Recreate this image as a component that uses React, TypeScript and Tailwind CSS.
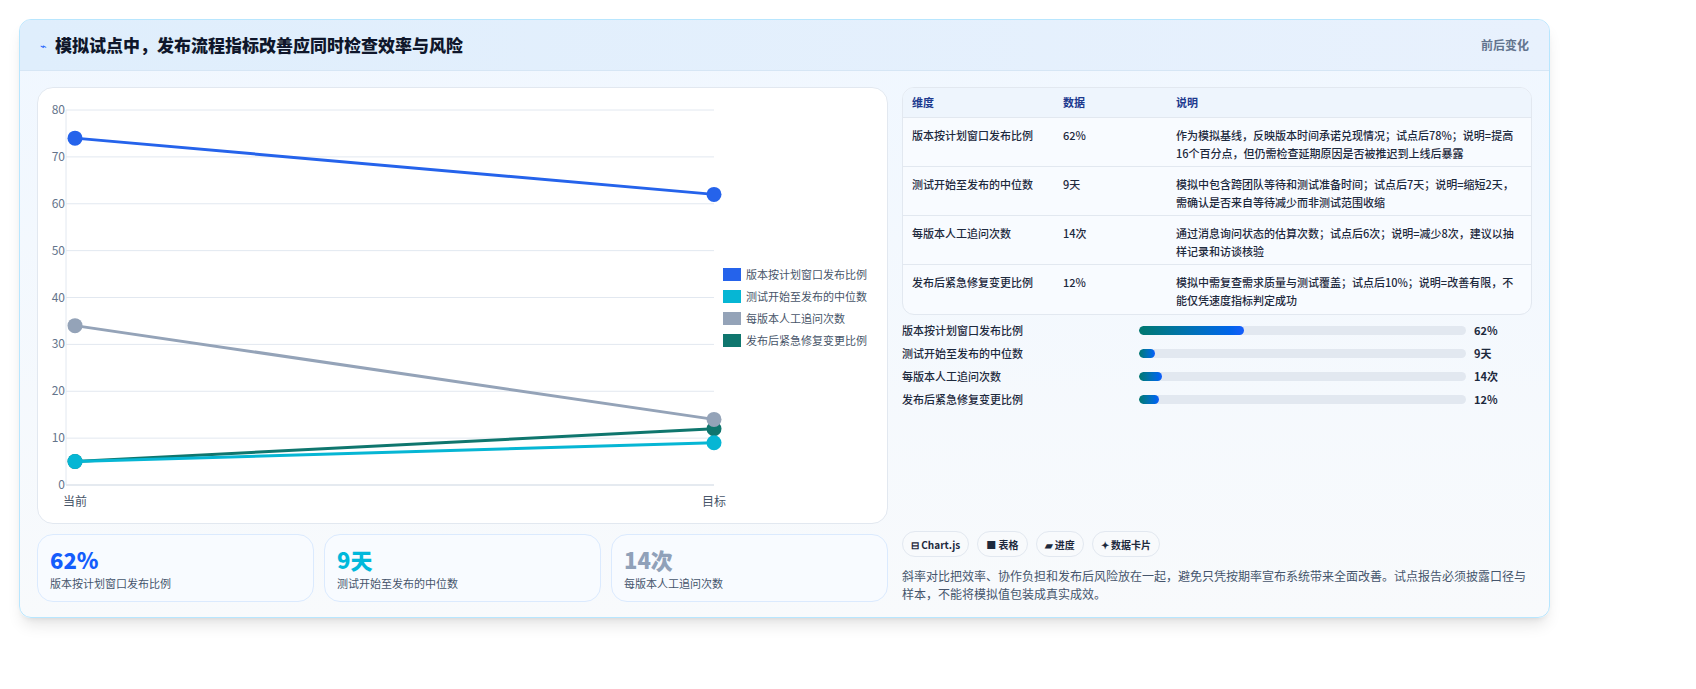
const font = { fontFamily: '"Noto Sans CJK SC", "Noto Sans", sans-serif' }

const series = [
  { name: '版本按计划窗口发布比例', color: '#2563eb', from: 74, to: 62 },
  { name: '测试开始至发布的中位数', color: '#06b6d4', from: 5, to: 9 },
  { name: '每版本人工追问次数', color: '#94a3b8', from: 34, to: 14 },
  { name: '发布后紧急修复变更比例', color: '#0f766e', from: 5, to: 12 },
]

const rows = [
  { dim: '版本按计划窗口发布比例', val: '62%', note: '作为模拟基线，反映版本时间承诺兑现情况；试点后78%；说明=提高16个百分点，但仍需检查延期原因是否被推迟到上线后暴露', pct: 32 },
  { dim: '测试开始至发布的中位数', val: '9天', note: '模拟中包含跨团队等待和测试准备时间；试点后7天；说明=缩短2天，需确认是否来自等待减少而非测试范围收缩', pct: 5 },
  { dim: '每版本人工追问次数', val: '14次', note: '通过消息询问状态的估算次数；试点后6次；说明=减少8次，建议以抽样记录和访谈核验', pct: 7 },
  { dim: '发布后紧急修复变更比例', val: '12%', note: '模拟中需复查需求质量与测试覆盖；试点后10%；说明=改善有限，不能仅凭速度指标判定成功', pct: 6 },
]

const y = (v: number) => 397 - v * 4.6875

function Chart() {
  return (
    <svg width="850" height="436" className="block">
      {[0, 10, 20, 30, 40, 50, 60, 70, 80].map((v) => (
        <g key={v}>
          <line x1="28" x2="676" y1={y(v)} y2={y(v)} stroke={v === 0 ? '#cbd5e1' : '#e2e8f0'} />
          <text x="27" y={y(v) + 4} textAnchor="end" fontSize="12" fill="#64748b" style={font}>{v}</text>
        </g>
      ))}
      <line x1="28" x2="28" y1="22" y2="397" stroke="#e2e8f0" />
      {[...series].reverse().map((s) => (
        <g key={s.name}>
          <line x1="37" y1={y(s.from)} x2="676" y2={y(s.to)} stroke={s.color} strokeWidth="3" />
          <circle cx="37" cy={y(s.from)} r="7.5" fill={s.color} />
          <circle cx="676" cy={y(s.to)} r="7.5" fill={s.color} />
        </g>
      ))}
      <text x="37" y="418" textAnchor="middle" fontSize="12" fill="#475569" style={font}>当前</text>
      <text x="676" y="418" textAnchor="middle" fontSize="12" fill="#475569" style={font}>目标</text>
      {series.map((s, i) => (
        <g key={s.name}>
          <rect x="685" y={180 + i * 22} width="18" height="13" fill={s.color} />
          <text x="708" y={191 + i * 22} fontSize="11" fill="#475569" style={font}>{s.name}</text>
        </g>
      ))}
    </svg>
  )
}

export default function App() {
  return (
    <div className="min-h-[689px] bg-white pt-[19px] px-[19px]" style={font}>
      <div className="w-[1531px] h-[599px] rounded-xl border border-sky-200 bg-gradient-to-b from-[#f0f7ff] to-[#f8fafc] shadow-lg overflow-hidden flex flex-col">
        <div className="h-[51px] flex items-center justify-between px-5 bg-gradient-to-r from-[#dfeefc] to-[#e8f1fd] border-b border-[#d6e6f5]">
          <div className="flex items-center gap-2">
            <span className="text-[11px] text-blue-600">⌁</span>
            <h1 className="text-[17px] font-extrabold text-slate-900">模拟试点中，发布流程指标改善应同时检查效率与风险</h1>
          </div>
          <span className="text-xs font-semibold text-slate-500">前后变化</span>
        </div>
        <div className="flex gap-[14px] px-[17px] pt-[16px]">
          <div className="w-[851px] flex flex-col gap-[10px]">
            <div className="h-[437px] rounded-2xl border border-slate-200 bg-white overflow-hidden">
              <Chart />
            </div>
            <div className="grid grid-cols-3 gap-[10px]">
              {[
                { v: '62%', c: 'text-blue-600', l: '版本按计划窗口发布比例' },
                { v: '9天', c: 'text-cyan-500', l: '测试开始至发布的中位数' },
                { v: '14次', c: 'text-slate-400', l: '每版本人工追问次数' },
              ].map((s) => (
                <div key={s.v} className="h-[68px] rounded-2xl border border-blue-100 bg-[#f8fbff] px-[12px] pt-[10px]">
                  <div className={`text-[22px] leading-7 font-extrabold ${s.c}`}>{s.v}</div>
                  <div className="text-[11px] text-slate-600 mt-[2px]">{s.l}</div>
                </div>
              ))}
            </div>
          </div>
          <div className="w-[631px] flex flex-col">
            <div className="rounded-xl border border-slate-200 overflow-hidden bg-[#f8fbff]">
              <div className="grid grid-cols-[151px_113px_1fr] h-[30px] items-center px-[9px] bg-[#eef5fd] border-b border-slate-200 text-[11px] font-semibold text-blue-900">
                <div>维度</div><div>数据</div><div>说明</div>
              </div>
              {rows.map((r, i) => (
                <div key={r.dim} className={`grid grid-cols-[151px_113px_1fr] px-[9px] pt-[8px] h-[49px] text-[11px] leading-[18px] font-medium text-slate-800 ${i < 3 ? 'border-b border-slate-200' : ''}`}>
                  <div>{r.dim}</div>
                  <div>{r.val}</div>
                  <div className="pr-2">{r.note}</div>
                </div>
              ))}
            </div>
            <div className="flex flex-col gap-[8px] mt-[8px]">
              {rows.map((r) => (
                <div key={r.dim} className="flex items-center h-[15px] text-[11px] font-medium text-slate-800">
                  <div className="w-[237px]">{r.dim}</div>
                  <div className="w-[327px] h-[9px] rounded-full bg-slate-200 overflow-hidden">
                    <div className="h-full rounded-full bg-gradient-to-r from-teal-700 to-blue-600" style={{ width: `${r.pct}%` }} />
                  </div>
                  <div className="ml-[8px] font-semibold">{r.val}</div>
                </div>
              ))}
            </div>
            <div className="flex gap-[8px] mt-[124px]">
              {['⊟ Chart.js', '■ 表格', '▰ 进度', '✦ 数据卡片'].map((c) => (
                <span key={c} className="h-[26px] px-[8px] flex items-center rounded-full border border-slate-200 bg-slate-50 text-[10px] font-semibold text-slate-800">{c}</span>
              ))}
            </div>
            <p className="mt-[10px] text-[12px] leading-[18px] text-slate-600">斜率对比把效率、协作负担和发布后风险放在一起，避免只凭按期率宣布系统带来全面改善。试点报告必须披露口径与样本，不能将模拟值包装成真实成效。</p>
          </div>
        </div>
      </div>
    </div>
  )
}
